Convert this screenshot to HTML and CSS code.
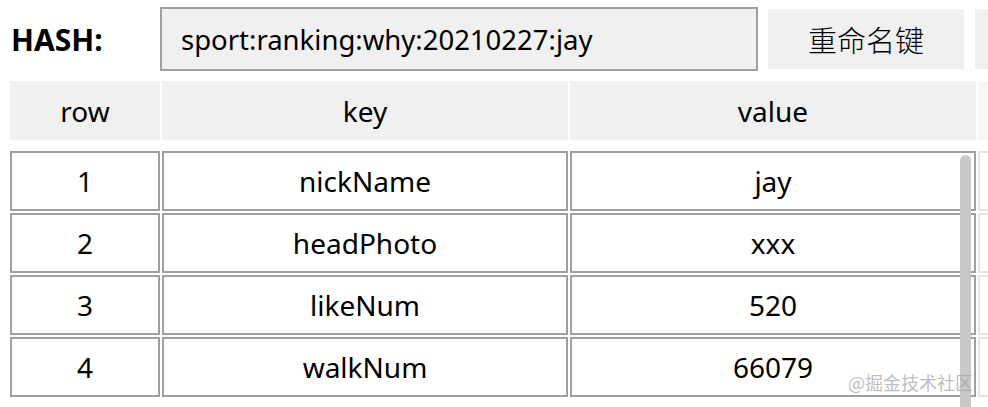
FILE: index.html
```html
<!DOCTYPE html>
<html>
<head>
<meta charset="utf-8">
<link rel="stylesheet" href="styles.css">
</head>
<body>
<div class="app">
  <div class="toolbar">
    <div class="label">HASH:</div>
    <div class="keybox">sport:ranking:why:20210227:jay</div>
    <div class="btn">重命名键</div>
    <div class="btn btn-cut"></div>
  </div>
  <div class="grid head">
    <div class="hcell">row</div>
    <div class="hcell">key</div>
    <div class="hcell">value</div>
    <div class="hcell extra"></div>
  </div>
  <div class="body">
    <div class="grid row">
      <div class="cell">1</div><div class="cell">nickName</div><div class="cell">jay</div><div class="cell extra"></div>
    </div>
    <div class="grid row">
      <div class="cell">2</div><div class="cell">headPhoto</div><div class="cell">xxx</div><div class="cell extra"></div>
    </div>
    <div class="grid row">
      <div class="cell">3</div><div class="cell">likeNum</div><div class="cell">520</div><div class="cell extra"></div>
    </div>
    <div class="grid row">
      <div class="cell">4</div><div class="cell">walkNum</div><div class="cell">66079</div><div class="cell extra"></div>
    </div>
    <div class="scrollbar"></div>
    <div class="watermark">@掘金技术社区</div>
  </div>
</div>
</body>
</html>
```
FILE: styles.css
```css
html, body {
  margin: 0;
  padding: 0;
  background: #ffffff;
  overflow: hidden;
}
body {
  font-family: "Noto Sans", "Open Sans", "Noto Sans CJK SC", sans-serif;
  color: #000;
  width: 988px;
  height: 407px;
}
.app {
  padding-left: 10px;
  height: 407px;
  overflow: hidden;
}
.toolbar {
  display: flex;
  align-items: center;
  height: 64px;
  margin-top: 7px;
}
.label {
  width: 150px;
  font-weight: 700;
  font-size: 30px;
  padding-left: 1px;
  box-sizing: border-box;
}
.keybox {
  width: 598px;
  height: 64px;
  box-sizing: border-box;
  border: 2px solid #a0a0a0;
  background: #f0f0f0;
  font-size: 27.5px;
  display: flex;
  align-items: center;
  padding-left: 19px;
}
.btn {
  margin-left: 10px;
  width: 196px;
  height: 60px;
  background: #f0f0f0;
  font-family: "Noto Sans CJK SC", sans-serif;
  font-size: 29px;
  font-weight: 300;
  display: flex;
  align-items: center;
  justify-content: center;
}
.btn-cut {
  margin-left: 11px;
  flex: 1;
}
.grid {
  display: grid;
  grid-template-columns: 150px 406px 406px 1fr;
  column-gap: 2px;
}
.head {
  margin-top: 10px;
  height: 59px;
}
.hcell {
  background: #f0f0f0;
  display: flex;
  align-items: center;
  justify-content: center;
  font-size: 28px;
}
.hcell.extra {
  background: #f6f6f6;
}
.body {
  position: relative;
  margin-top: 11px;
  height: 256px;
  overflow: hidden;
  display: flex;
  flex-direction: column;
  row-gap: 2px;
}
.row {
  height: 60px;
  flex: none;
}
.cell {
  border: 2px solid #a0a0a0;
  box-sizing: border-box;
  display: flex;
  align-items: center;
  justify-content: center;
  font-size: 28px;
}
.cell.extra {
  border-color: #e4e4e4;
  border-right: none;
}
.scrollbar {
  position: absolute;
  left: 950px;
  top: 4px;
  width: 11px;
  height: 300px;
  background: #c8c8c8;
  border-radius: 6px 6px 0 0;
}
.watermark {
  position: absolute;
  left: 838px;
  top: 218px;
  font-family: "Noto Sans CJK SC", sans-serif;
  font-size: 18px;
  color: rgba(160, 160, 160, 0.7);
}
```
